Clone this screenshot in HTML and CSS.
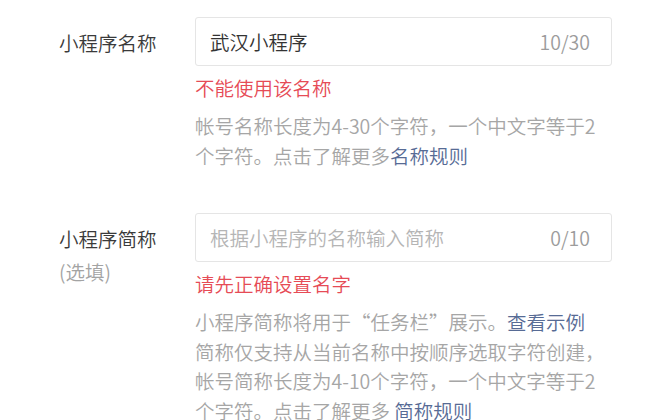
FILE: index.html
```html
<!DOCTYPE html>
<html lang="zh-CN">
<head>
<meta charset="utf-8">
<link rel="stylesheet" href="styles.css">
</head>
<body>
<div class="form">
  <div class="row row-name">
    <div class="label">
      <div class="label-main">小程序名称</div>
    </div>
    <div class="field">
      <div class="input">
        <span class="value">武汉小程序</span>
        <span class="counter">10/30</span>
      </div>
      <div class="error">不能使用该名称</div>
      <div class="help">帐号名称长度为4-30个字符，一个中文字等于2个字符。点击了解更多<a class="link">名称规则</a></div>
    </div>
  </div>
  <div class="row row-short">
    <div class="label">
      <div class="label-main">小程序简称</div>
      <div class="label-sub">(选填)</div>
    </div>
    <div class="field">
      <div class="input">
        <span class="placeholder">根据小程序的名称输入简称</span>
        <span class="counter">0/10</span>
      </div>
      <div class="error">请先正确设置名字</div>
      <div class="help">小程序简称将用于“任务栏”展示。<a class="link">查看示例</a><br>简称仅支持从当前名称中按顺序选取字符创建，帐号简称长度为4-10个字符，一个中文字等于2个字符。点击了解更多 <a class="link">简称规则</a></div>
    </div>
  </div>
</div>
</body>
</html>
```

FILE: styles.css
```css
* { box-sizing: border-box; }
html, body {
  margin: 0;
  padding: 0;
  background: #ffffff;
}
body {
  font-family: "Noto Sans CJK SC", "Noto Sans", sans-serif;
  font-size: 19.5px;
  font-weight: 350;
  color: #353535;
  overflow: hidden;
  height: 420px;
}
.form {
  padding: 17px 48px 0 59px;
  display: flex;
  flex-direction: column;
  gap: 43px;
}
.row {
  display: flex;
}
.label {
  width: 136px;
  flex: none;
  padding-top: 8.5px;
}
.label-main {
  line-height: 33px;
  color: #3a3a3a;
}
.label-sub {
  line-height: 33px;
  color: #a3a3a3;
}
.field {
  flex: 1;
  min-width: 0;
}
.input {
  height: 49px;
  border: 1px solid #e5e5e5;
  border-radius: 3px;
  display: flex;
  align-items: center;
  justify-content: space-between;
  padding: 0 21px 0 14px;
}
.value {
  color: #333333;
}
.placeholder {
  color: #b5b5b5;
}
.counter {
  color: #9c9c9c;
}
.error {
  margin-top: 7px;
  line-height: 30px;
  color: #e64b56;
}
.help {
  margin-top: 8px;
  line-height: 29.5px;
  color: #a6a6a6;
}
.link {
  color: #576b95;
  text-decoration: none;
}
```
